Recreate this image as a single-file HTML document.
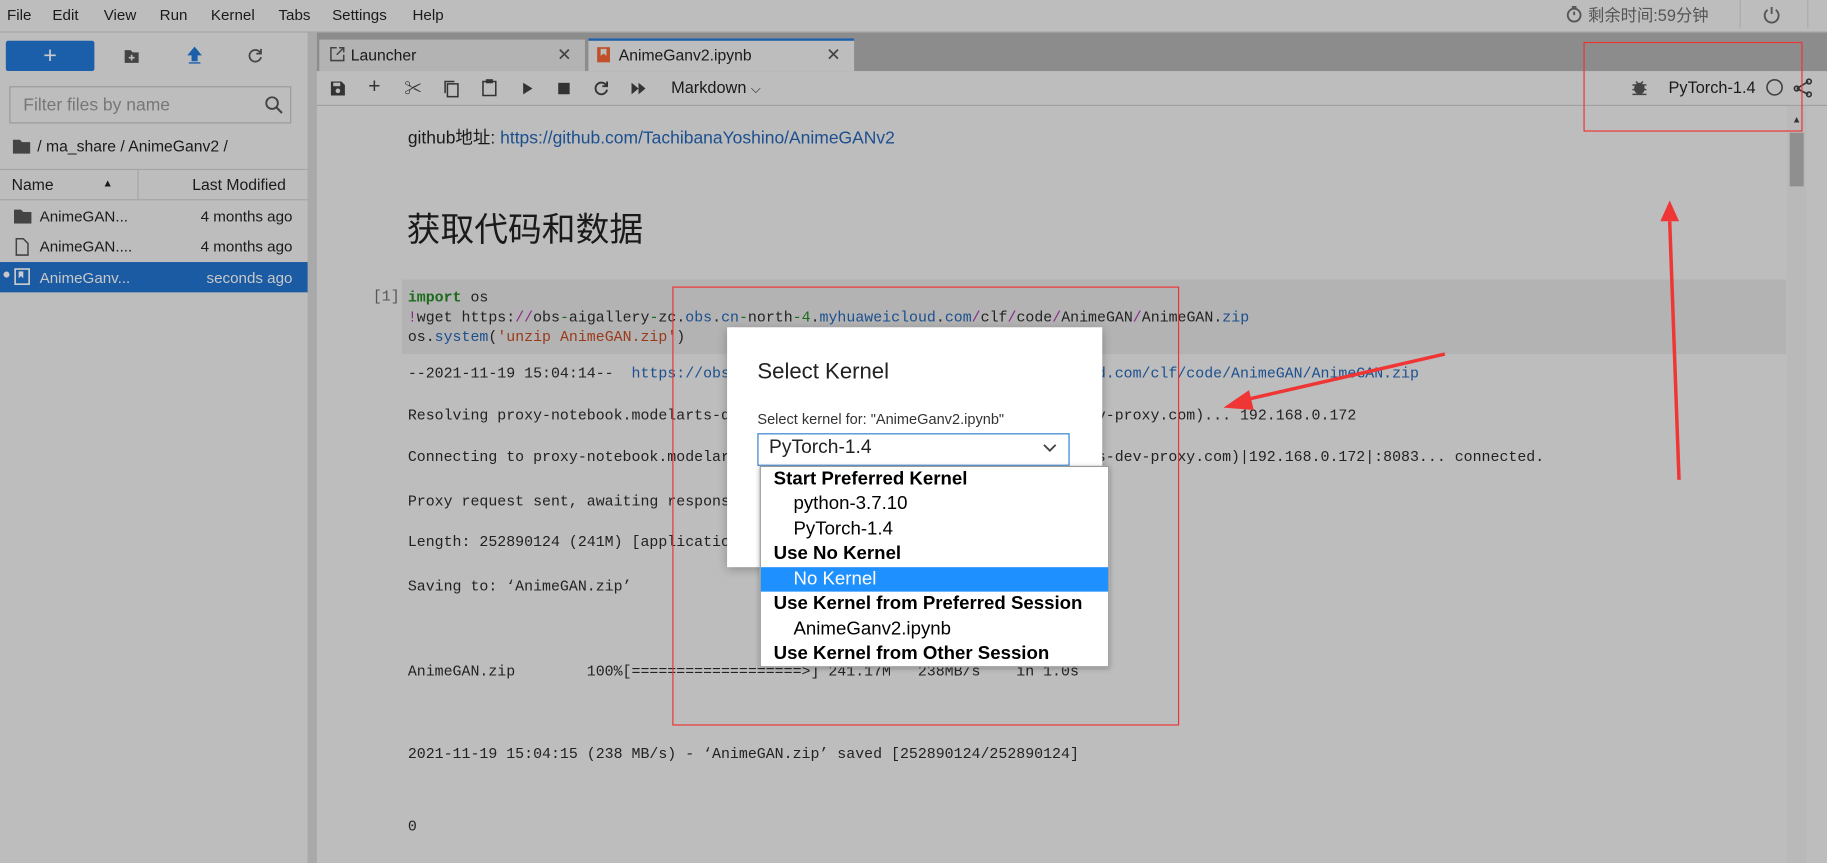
<!DOCTYPE html>
<html><head><meta charset="utf-8"><style>
*{margin:0;padding:0;box-sizing:border-box}
body{width:1827px;height:863px;overflow:hidden;background:#bdbdbd;font-family:"Liberation Sans","Noto Sans CJK SC",sans-serif;color:#1a1a1a}
#w{position:absolute;left:0;top:0;width:1568px;height:741px;transform:scale(1.16518,1.16464);transform-origin:0 0;background:#bdbdbd;overflow:hidden}
.a{position:absolute;white-space:nowrap}
.m{font-family:"Liberation Mono",monospace;font-size:12.8px;color:#222;white-space:pre}
.menu span{position:absolute;top:5px;font-size:13px}
.row{position:absolute;left:0;width:264px;height:26px;font-size:13px}
.dd div{height:21.3px;line-height:21px;font-size:16px;padding-left:11px}
.dd .i{padding-left:28px}
.dd b{font-weight:bold}
</style></head><body><div id="w">
<div class="menu">
<span style="left:6px">File</span><span style="left:45px">Edit</span><span style="left:89px">View</span><span style="left:137px">Run</span><span style="left:181px">Kernel</span><span style="left:239px">Tabs</span><span style="left:285px">Settings</span><span style="left:354px">Help</span>
</div>
<div class="a" style="left:1343px;top:3px;font-size:14px;color:#555">
<svg width="16" height="16" viewBox="0 0 16 16" style="vertical-align:-2px"><circle cx="8" cy="9" r="5.5" fill="none" stroke="#555" stroke-width="1.6"/><path d="M6 2h4M8 9V6" stroke="#555" stroke-width="1.6"/></svg> 剩余时间:59分钟</div>
<div class="a" style="left:1493px;top:0;width:1px;height:24px;background:#aaa"></div>
<div class="a" style="left:1551px;top:0;width:1px;height:24px;background:#aaa"></div>
<svg class="a" style="left:1512px;top:4px" width="17" height="17" viewBox="0 0 17 17"><path d="M5 4.5A6 6 0 1 0 12 4.5" fill="none" stroke="#555" stroke-width="1.6"/><path d="M8.5 2v6" stroke="#555" stroke-width="1.6"/></svg>
<div class="a" style="left:0;top:27px;width:1568px;height:1px;background:#a5a5a5"></div>
<!-- sidebar -->
<div class="a" style="left:264px;top:28px;width:8px;height:713px;background:#a9a9a9"></div>
<div class="a" style="left:5px;top:35px;width:76px;height:26px;background:#1b5faa;border-radius:2px;color:#ccc;font-size:20px;text-align:center;line-height:26px">+</div>
<svg class="a" style="left:106px;top:41px" width="14" height="14"><path d="M1 2h5l2 2h5v9H1z" fill="#444"/><path d="M7 6v5M4.5 8.5h5" stroke="#bbb" stroke-width="1.4"/></svg>
<svg class="a" style="left:160px;top:40px" width="14" height="16"><path d="M7 1L2 7h3v5h4V7h3z M2 14h10" fill="#1b5faa" stroke="#1b5faa" stroke-width="1.2"/></svg>
<svg class="a" style="left:212px;top:41px" width="14" height="14"><path d="M11.5 4.5A5 5 0 1 0 12 8" fill="none" stroke="#444" stroke-width="1.5"/><path d="M12 1v4H8" fill="none" stroke="#444" stroke-width="1.5"/></svg>
<div class="a" style="left:8px;top:74px;width:242px;height:32px;border:1px solid #999"></div>
<div class="a" style="left:20px;top:82px;font-size:15px;color:#777">Filter files by name</div>
<svg class="a" style="left:227px;top:82px" width="16" height="16"><circle cx="6.5" cy="6.5" r="5" fill="none" stroke="#444" stroke-width="1.6"/><path d="M10 10l5 5" stroke="#444" stroke-width="1.8"/></svg>
<svg class="a" style="left:11px;top:119px" width="15" height="13"><path d="M0 1h6l2 2h7v10H0z" fill="#444"/></svg>
<div class="a" style="left:32px;top:118px;font-size:13.5px">/ ma_share / AnimeGanv2 /</div>
<div class="a" style="left:0;top:145px;width:264px;height:1px;background:#a5a5a5"></div>
<div class="a" style="left:118px;top:146px;width:1px;height:25px;background:#a5a5a5"></div>
<div class="a" style="left:0;top:171px;width:264px;height:1px;background:#a5a5a5"></div>
<div class="a" style="left:10px;top:151px;font-size:13.5px">Name</div>
<div class="a" style="left:88px;top:152px;font-size:9px">▲</div>
<div class="a" style="left:165px;top:151px;font-size:13.5px">Last Modified</div>
<div class="row" style="top:173px"><svg class="a" style="left:12px;top:6px" width="15" height="13"><path d="M0 1h6l2 2h7v10H0z" fill="#444"/></svg><span class="a" style="left:34px;top:5px">AnimeGAN...</span><span class="a" style="right:13px;top:5px">4 months ago</span></div>
<div class="row" style="top:199px"><svg class="a" style="left:13px;top:5px" width="12" height="16"><path d="M1 1h6l4 4v10H1z" fill="none" stroke="#444" stroke-width="1.3"/></svg><span class="a" style="left:34px;top:5px">AnimeGAN....</span><span class="a" style="right:13px;top:5px">4 months ago</span></div>
<div class="row" style="top:225px;background:#1a5ba3;color:#c8c8c8"><span class="a" style="left:2px;top:3px;font-size:12px">●</span><svg class="a" style="left:12px;top:5px" width="14" height="15"><rect x="1" y="1" width="12" height="13" fill="none" stroke="#ccc" stroke-width="1.4"/><path d="M4 3v6l2-2 2 2V3" fill="#ccc"/></svg><span class="a" style="left:34px;top:6px">AnimeGanv...</span><span class="a" style="right:13px;top:6px">seconds ago</span></div>
<!-- tab bar -->
<div class="a" style="left:272px;top:28px;width:1296px;height:33px;background:#8c8c8c"></div>
<div class="a" style="left:274px;top:34px;width:228px;height:27px;background:#b3b3b3"></div>
<svg class="a" style="left:283px;top:40px" width="13" height="13"><path d="M6 1H1v11h11V7M8 1h4v4M12 1L6 7" fill="none" stroke="#444" stroke-width="1.3"/></svg>
<div class="a" style="left:301px;top:40px;font-size:13.5px">Launcher</div>
<div class="a" style="left:478px;top:38px;font-size:15px;color:#444">✕</div>
<div class="a" style="left:505px;top:33px;width:228px;height:28px;background:#bdbdbd;border-top:2px solid #1b5faa"></div>
<svg class="a" style="left:512px;top:40px" width="12" height="14"><rect x="0.5" y="0.5" width="11" height="13" fill="#c0502a"/><path d="M3.5 2v6l2.5-2 2.5 2V2" fill="#bdbdbd"/></svg>
<div class="a" style="left:531px;top:40px;font-size:13.5px">AnimeGanv2.ipynb</div>
<div class="a" style="left:709px;top:38px;font-size:15px;color:#444">✕</div>
<!-- toolbar -->
<div class="a" style="left:272px;top:90px;width:1296px;height:1px;background:#a0a0a0"></div>
<div class="a" style="left:283px;top:65px;font-size:15px;color:#333;letter-spacing:0">
<svg width="14" height="14" style="position:absolute;left:0;top:4px"><path d="M1 1h9l3 3v9H1z" fill="#333"/><rect x="3" y="2" width="6" height="3" fill="#bbb"/><circle cx="7" cy="9" r="2" fill="#bbb"/></svg>
<span style="position:absolute;left:33px;top:-1px;font-size:18px">+</span>
<span style="position:absolute;left:64px;top:0">✂</span>
<svg width="14" height="16" style="position:absolute;left:97px;top:3px"><rect x="4" y="4" width="9" height="11" fill="none" stroke="#333" stroke-width="1.3"/><path d="M2 12V2h8" fill="none" stroke="#333" stroke-width="1.3"/></svg>
<svg width="14" height="16" style="position:absolute;left:130px;top:2px"><rect x="1.5" y="3" width="11" height="12" fill="none" stroke="#333" stroke-width="1.3"/><rect x="4" y="1" width="6" height="3.5" fill="#333"/></svg>
<svg width="10" height="12" style="position:absolute;left:165px;top:5px"><path d="M1 1l8 5-8 5z" fill="#333"/></svg>
<svg width="10" height="10" style="position:absolute;left:196px;top:6px"><rect width="10" height="10" fill="#333"/></svg>
<svg width="14" height="14" style="position:absolute;left:226px;top:4px"><path d="M11.5 4.5A5 5 0 1 0 12 8" fill="none" stroke="#333" stroke-width="1.6"/><path d="M12 1v4H8" fill="none" stroke="#333" stroke-width="1.6"/></svg>
<svg width="14" height="12" style="position:absolute;left:258px;top:5px"><path d="M1 1l6 5-6 5zM7 1l6 5-6 5z" fill="#333"/></svg>
</div>
<div class="a" style="left:576px;top:67px;font-size:14px">Markdown <span style="font-size:11px">⌵</span></div>
<svg class="a" style="left:1400px;top:68px" width="14" height="14"><ellipse cx="7" cy="8" rx="4.5" ry="5" fill="#444"/><path d="M1 5h12M1 9h12M1 13h12M4 2l2 2M10 2l-2 2" stroke="#444" stroke-width="1.3"/></svg>
<div class="a" style="left:1432px;top:67px;font-size:14px">PyTorch-1.4</div>
<svg class="a" style="left:1515px;top:67px" width="16" height="16"><circle cx="8" cy="8" r="6.5" fill="none" stroke="#444" stroke-width="1.4"/></svg>
<svg class="a" style="left:1539px;top:67px" width="17" height="17"><path d="M3 9L13 3M3 9l10 5" stroke="#333" stroke-width="1.4"/><circle cx="3" cy="9" r="2" fill="none" stroke="#333" stroke-width="1.4"/><circle cx="13.5" cy="3" r="2" fill="none" stroke="#333" stroke-width="1.4"/><circle cx="13.5" cy="14" r="2" fill="none" stroke="#333" stroke-width="1.4"/></svg>
<!-- scrollbar -->
<div class="a" style="left:1534px;top:91px;width:16px;height:650px;background:#b9b9b9"></div>
<div class="a" style="left:1538px;top:98px;font-size:8px;color:#333">▲</div>
<div class="a" style="left:1536px;top:114px;width:12px;height:46px;background:#8f8f8f"></div>
<!-- content -->
<div class="a" style="left:350px;top:107px;font-size:15px">github地址: <span style="color:#1b4f8f">https://github.com/TachibanaYoshino/AnimeGANv2</span></div>
<div class="a" style="left:349px;top:174px;font-size:29px">获取代码和数据</div>
<div class="a" style="left:345px;top:240px;width:1188px;height:64px;background:#b3b3b3"></div>
<div class="a m" style="left:320px;top:247px;color:#555">[1]</div>
<div class="a m" style="left:350px;top:247px;line-height:17px"><b style="color:#1a6b1a">import</b> os
<span style="color:#8a2a8a">!</span>wget https:<span style="color:#8a2a8a">//</span>obs<span style="color:#1a6b1a">-</span>aigallery<span style="color:#1a6b1a">-</span>zc.<span style="color:#1b4f8f">obs</span>.<span style="color:#1b4f8f">cn</span><span style="color:#1a6b1a">-</span>north<span style="color:#1a6b1a">-4</span>.<span style="color:#1b4f8f">myhuaweicloud</span>.<span style="color:#1b4f8f">com</span><span style="color:#8a2a8a">/</span>clf<span style="color:#8a2a8a">/</span>code<span style="color:#8a2a8a">/</span>AnimeGAN<span style="color:#8a2a8a">/</span>AnimeGAN.<span style="color:#1b4f8f">zip</span>
os.<span style="color:#1b4f8f">system</span>(<span style="color:#9a3a1a">'unzip AnimeGAN.zip'</span>)</div>
<div class="a m" style="left:350px;top:313px">--2021-11-19 15:04:14--  <span style="color:#1b4f8f">https://obs-aigallery-zc.obs.cn-north-4.myhuaweicloud.com/clf/code/AnimeGAN/AnimeGAN.zip</span></div>
<div class="a m" style="left:350px;top:349px">Resolving proxy-notebook.modelarts-dev-proxy.com (proxy-notebook.modelarts-dev-proxy.com)... 192.168.0.172</div>
<div class="a m" style="left:350px;top:385px">Connecting to proxy-notebook.modelarts-dev-proxy.com (proxy-notebook.modelarts-dev-proxy.com)|192.168.0.172|:8083... connected.</div>
<div class="a m" style="left:350px;top:423px">Proxy request sent, awaiting response... 200 OK</div>
<div class="a m" style="left:350px;top:458px">Length: 252890124 (241M) [application/zip]</div>
<div class="a m" style="left:350px;top:496px">Saving to: ‘AnimeGAN.zip’</div>
<div class="a m" style="left:350px;top:569px">AnimeGAN.zip        100%[===================>] 241.17M   238MB/s    in 1.0s</div>
<div class="a m" style="left:350px;top:640px">2021-11-19 15:04:15 (238 MB/s) - ‘AnimeGAN.zip’ saved [252890124/252890124]</div>
<div class="a m" style="left:350px;top:702px">0</div>
<!-- annotations -->
<div class="a" style="left:1359px;top:36px;width:188px;height:77px;border:1px solid #e33"></div>
<div class="a" style="left:577px;top:246px;width:435px;height:377px;border:1px solid #e33"></div>
<svg class="a" style="left:0;top:0" width="1568" height="741"><path d="M1441 412L1433 190" stroke="#f03535" stroke-width="3"/><path d="M1425 190L1433 172L1441 190z" fill="#f03535"/><path d="M1240 304L1070 343" stroke="#f03535" stroke-width="3"/><path d="M1072 335L1050 350L1076 352z" fill="#f03535"/></svg>
<!-- dialog -->
<div class="a" style="left:624px;top:281px;width:322px;height:206px;background:#fff;box-shadow:0 2px 8px rgba(0,0,0,.25)"></div>
<div class="a" style="left:650px;top:309px;font-size:19px;color:#222">Select Kernel</div>
<div class="a" style="left:650px;top:353px;font-size:12.5px;color:#333">Select kernel for: "AnimeGanv2.ipynb"</div>
<div class="a" style="left:650px;top:372px;width:268px;height:28px;border:1px solid #2f7fcf;background:#fff"></div>
<div class="a" style="left:660px;top:375px;font-size:16.5px;color:#222">PyTorch-1.4</div>
<svg class="a" style="left:895px;top:380px" width="12" height="10"><path d="M1 2l5 5 5-5" fill="none" stroke="#444" stroke-width="1.6"/></svg>
<div class="a dd" style="left:652px;top:400px;width:300px;height:173px;background:#fff;border:1px solid #999;box-shadow:0 1px 4px rgba(0,0,0,.3);color:#000;padding-top:0">
<div><b>Start Preferred Kernel</b></div>
<div class="i">python-3.7.10</div>
<div class="i">PyTorch-1.4</div>
<div><b>Use No Kernel</b></div>
<div class="i" style="background:#1e90ff;color:#fff;margin-top:1px">No Kernel</div>
<div><b>Use Kernel from Preferred Session</b></div>
<div class="i">AnimeGanv2.ipynb</div>
<div><b>Use Kernel from Other Session</b></div>
</div>
</div></body></html>
